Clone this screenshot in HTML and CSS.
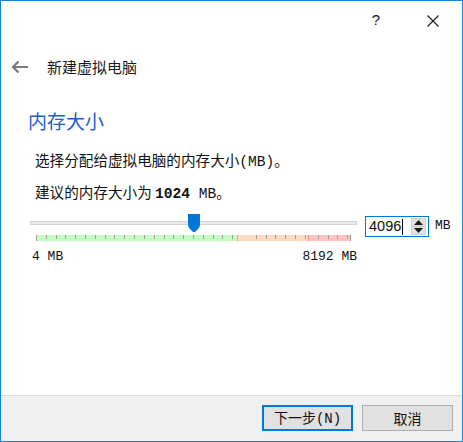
FILE: index.html
```html
<!DOCTYPE html>
<html>
<head>
<meta charset="utf-8">
<link rel="stylesheet" href="styles.css">
</head>
<body>
<div class="window">
  <div class="titlebar">
    <span class="tb-btn help">?</span>
    <span class="tb-btn close">
      <svg width="12" height="12" viewBox="0 0 12 12"><path d="M0.5 0.5 L11.5 11.5 M11.5 0.5 L0.5 11.5" stroke="#1a1a1a" stroke-width="1.1" fill="none"/></svg>
    </span>
  </div>
  <div class="header">
    <svg class="back" width="18" height="14" viewBox="0 0 18 14"><path d="M17 7 H2 M7.5 1.5 L2 7 L7.5 12.5" stroke="#7a7a7a" stroke-width="2.2" fill="none"/></svg>
    <span class="header-title">新建虚拟电脑</span>
  </div>
  <div class="content">
    <div class="page-title">内存大小</div>
    <div class="desc">选择分配给虚拟电脑的内存大小<span class="mono">(MB)</span>。</div>
    <div class="desc">建议的内存大小为 <b class="mono">1024</b><span class="mono"> MB</span>。</div>
    <div class="slider-row">
      <div class="slider-col">
        <div class="slider">
          <div class="track"></div>
          <svg class="handle" width="12" height="18" viewBox="0 0 12 18"><path d="M0 0 H12 V11 Q12 13 10 15 L7 18 H5 L2 15 Q0 13 0 11 Z" fill="#0078d7"/></svg>
        </div>
        <div class="ticks">
          <div class="zone green"></div>
          <div class="zone orange"></div>
          <div class="zone red"></div>
        </div>
        <div class="labels">
          <span>4 MB</span>
          <span>8192 MB</span>
        </div>
      </div>
      <div class="spin">
        <div class="spin-text">4096<span class="caret"></span></div>
        <div class="spin-btns">
          <div class="spin-up"><svg width="9" height="5" viewBox="0 0 9 5"><path d="M0 5 L4.5 0 L9 5 Z" fill="#1a1a1a"/></svg></div>
          <div class="spin-down"><svg width="9" height="5" viewBox="0 0 9 5"><path d="M0 0 L4.5 5 L9 0 Z" fill="#1a1a1a"/></svg></div>
        </div>
      </div>
      <span class="unit">MB</span>
    </div>
  </div>
  <div class="footer">
    <button class="btn primary">下一步<span class="mono">(N)</span></button>
    <button class="btn">取消</button>
  </div>
</div>
</body>
</html>
```

FILE: styles.css
```css
* { box-sizing: border-box; }
html, body { margin: 0; padding: 0; background: #fff; }
body {
  font-family: "Noto Sans CJK SC", "Liberation Sans", sans-serif;
  color: #1a1a1a;
}
.window {
  width: 463px;
  height: 442px;
  border: 1px solid #1883d7;
  display: flex;
  flex-direction: column;
  background: #fff;
}
.titlebar {
  height: 39px;
  display: flex;
  justify-content: flex-end;
  align-items: center;
}
.tb-btn {
  display: flex;
  align-items: center;
  justify-content: center;
  height: 39px;
}
.help {
  width: 20px;
  font-family: "Liberation Sans", sans-serif;
  font-size: 15px;
  margin-right: 37px;
  padding-bottom: 2px;
}
.close {
  width: 20px;
  margin-right: 19px;
}
.header {
  height: 54px;
  display: flex;
  align-items: center;
  padding-left: 10px;
}
.back { display: block; }
.header-title {
  margin-left: 18px;
  font-size: 15px;
  line-height: 20px;
  color: #1a1a1a;
}
.content {
  flex: 1;
  display: flex;
  flex-direction: column;
}
.page-title {
  margin-top: 14px;
  margin-left: 27px;
  font-size: 19px;
  line-height: 26px;
  color: #1a62c8;
}
.page-title + .desc { margin-top: 11px; }
.desc {
  margin-left: 34px;
  font-size: 14.6px;
  line-height: 30px;
  color: #111;
}
.mono { font-family: "Liberation Mono", monospace; }
.desc b { font-weight: bold; }
.slider-row {
  margin-top: 4px;
  display: flex;
  align-items: flex-start;
  margin-left: 29px;
}
.slider-col {
  width: 327px;
  display: flex;
  flex-direction: column;
}
.slider {
  position: relative;
  height: 21px;
}
.track {
  position: absolute;
  left: 0;
  right: 0;
  top: 8px;
  height: 4px;
  background: #e9eaea;
  border: 1px solid #d4d4d4;
}
.handle {
  position: absolute;
  left: 158px;
  top: 1px;
  display: block;
}
.ticks {
  margin: 1px 6px 0 6px;
  height: 6px;
  display: flex;
  position: relative;
  border-left: 1px solid #9b9b8f;
  border-right: 1px solid #9b9b8f;
}
.zone {
  height: 6px;
  background-image: repeating-linear-gradient(to right, transparent 0 8.8125px, #a59f96 8.8125px 9.8125px);
  background-size: 100% 4px;
  background-repeat: no-repeat;
}
.green { width: 200px; background-color: #c4fcc4; }
.orange { width: 71px; background-color: #ffd9c2; border-left: 1px solid #f0a77c; background-position: 9px 0; }
.red { flex: 1; background-color: #ffc5c5; border-left: 1px solid #f08f8f; }
.labels {
  margin-top: 8px;
  display: flex;
  justify-content: space-between;
  font-family: "Liberation Mono", monospace;
  font-size: 13px;
  line-height: 16px;
  color: #111;
  padding-left: 2px;
}
.spin {
  margin-top: 3px;
  margin-left: 8px;
  width: 64px;
  height: 21px;
  border: 1px solid #0078d7;
  display: flex;
  align-items: center;
  justify-content: space-between;
  padding: 0 2px 0 3px;
}
.spin-text {
  font-family: "Liberation Sans", sans-serif;
  font-size: 14.5px;
  line-height: 17px;
  color: #111;
  display: flex;
  align-items: center;
}
.caret {
  display: inline-block;
  width: 1px;
  height: 16px;
  background: #000;
  margin-left: 1px;
}
.spin-btns {
  width: 15px;
  height: 17px;
  display: flex;
  flex-direction: column;
  background: #e1e1e1;
  border: 1px solid #d0d0d0;
}
.spin-up, .spin-down {
  flex: 1;
  display: flex;
  align-items: center;
  justify-content: center;
}
.spin-up { border-bottom: 1px solid #c8c8c8; }
.spin-up svg, .spin-down svg { display: block; }
.unit {
  margin-left: 6px;
  margin-top: 5px;
  font-family: "Liberation Mono", monospace;
  font-size: 13px;
  line-height: 16px;
  color: #111;
}
.footer {
  height: 46px;
  border-top: 1px solid #dcdcdc;
  background: #f0f0f0;
  display: flex;
  justify-content: flex-end;
  align-items: flex-start;
  padding: 9px 9px 0 0;
  gap: 9px;
}
.btn {
  width: 91px;
  height: 26px;
  margin: 0;
  padding: 0;
  background: #e1e1e1;
  border: 1px solid #adadad;
  font-family: "Noto Sans CJK SC", "Liberation Sans", sans-serif;
  font-size: 14px;
  line-height: 20px;
  color: #111;
}
.btn.primary { border: 2px solid #0078d7; }
```
